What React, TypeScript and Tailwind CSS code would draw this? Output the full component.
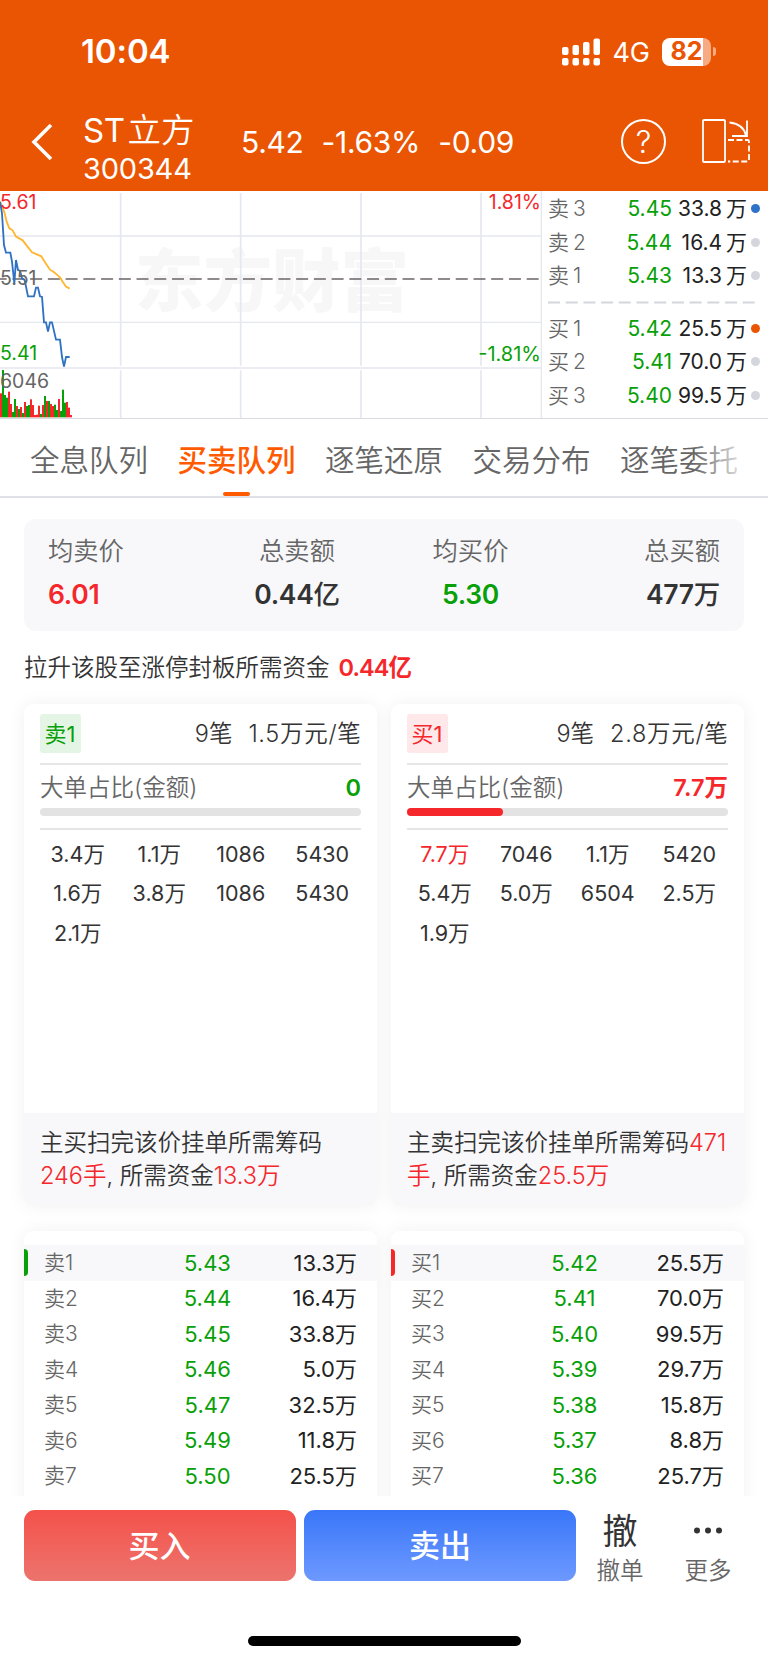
import clsx from 'clsx';

interface Level {
    label: string;
    price: string;
    volume: string;
    dot?: string;
}

interface QueueCardProps {
    side: 'sell' | 'buy';
    badge: string;
    average: string;
    bigAmount: string;
    percent: number;
    orders: string[];
    children: React.ReactNode;
}

const asks: Level[] = [
    { label: '卖 3', price: '5.45', volume: '33.8 万', dot: 'bg-[#2f72c9]' },
    { label: '卖 2', price: '5.44', volume: '16.4 万' },
    { label: '卖 1', price: '5.43', volume: '13.3 万' },
];

const bids: Level[] = [
    { label: '买 1', price: '5.42', volume: '25.5 万', dot: 'bg-[#ea5504]' },
    { label: '买 2', price: '5.41', volume: '70.0 万' },
    { label: '买 3', price: '5.40', volume: '99.5 万' },
];

const sellLevels: Level[] = [
    { label: '卖1', price: '5.43', volume: '13.3万' },
    { label: '卖2', price: '5.44', volume: '16.4万' },
    { label: '卖3', price: '5.45', volume: '33.8万' },
    { label: '卖4', price: '5.46', volume: '5.0万' },
    { label: '卖5', price: '5.47', volume: '32.5万' },
    { label: '卖6', price: '5.49', volume: '11.8万' },
    { label: '卖7', price: '5.50', volume: '25.5万' },
];

const buyLevels: Level[] = [
    { label: '买1', price: '5.42', volume: '25.5万' },
    { label: '买2', price: '5.41', volume: '70.0万' },
    { label: '买3', price: '5.40', volume: '99.5万' },
    { label: '买4', price: '5.39', volume: '29.7万' },
    { label: '买5', price: '5.38', volume: '15.8万' },
    { label: '买6', price: '5.37', volume: '8.8万' },
    { label: '买7', price: '5.36', volume: '25.7万' },
];

const tabs = ['全息队列', '买卖队列', '逐笔还原', '交易分布', '逐笔委托'];

// [height, isUp]
const volumeBars: [number, number][] = [
    [72, 1], [142, 0], [67, 0], [59, 0], [77, 1], [40, 1], [16, 0], [55, 0], [34, 1], [25, 0], [31, 1], [13, 0],
    [46, 1], [34, 0], [37, 0], [54, 1], [37, 1], [7, 1], [8, 1], [35, 1], [10, 0], [37, 1], [64, 0], [49, 1],
    [49, 0], [40, 1], [34, 1], [38, 0], [22, 0], [55, 1], [19, 0], [83, 0], [44, 0], [46, 1], [29, 1], [7, 1],
];

function StatusBar() {
    return (
        <div className="flex h-[103px] items-center pl-[81px] pr-[52px] text-white">
            <span className="text-[33px] font-semibold leading-none tracking-[-0.1px]">10:04</span>
            <div className="ml-auto flex items-center">
                <svg className="h-7 w-[39px]" viewBox="0 0 39 28" fill="currentColor">
                    <rect x="0" y="9" width="6.5" height="8" rx="2" />
                    <rect x="10.5" y="7" width="6.5" height="10" rx="2" />
                    <rect x="21" y="4" width="6.5" height="13" rx="2" />
                    <rect x="31.5" y="0.5" width="6.5" height="16.5" rx="2" />
                    <rect x="0" y="20" width="6.5" height="7.5" rx="2" />
                    <rect x="10.5" y="20" width="6.5" height="7.5" rx="2" />
                    <rect x="21" y="20" width="6.5" height="7.5" rx="2" />
                    <rect x="31.5" y="20" width="6.5" height="7.5" rx="2" />
                </svg>
                <span className="ml-[11px] pt-[2px] text-[27px] font-normal leading-none">4G</span>
                <div className="ml-[12px] flex h-[28px] w-[49px] items-center justify-center rounded-[8px] bg-[linear-gradient(90deg,#fff_83%,#f6ab82_83%)]">
                    <span className="text-[25px] font-bold leading-none text-[#ea5504]">82</span>
                </div>
                <span className="ml-[2px] h-[9px] w-[3px] rounded-r-full bg-[#f6ab82]" />
            </div>
        </div>
    );
}

function TitleBar() {
    return (
        <div className="flex h-[87px] text-white">
            <svg className="ml-[31px] mt-[20px] h-[38px] w-[22px]" viewBox="0 0 22 38" fill="none" stroke="currentColor" strokeWidth="3.6">
                <path d="M20 2 3 19l17 17" />
            </svg>
            <div className="ml-[30px] mt-[10px] w-[158px]">
                <div className="whitespace-nowrap text-[33px] leading-[34px]">
                    <span className="font-normal tracking-[-0.5px]">ST</span>
                    <span className="ml-[3px] text-[33.5px]">立方</span>
                </div>
                <div className="mt-[4px] text-[29px] font-normal leading-[36px] tracking-[-0.2px]">300344</div>
            </div>
            <div className="mt-[21px] flex h-[36px] items-center gap-[18px] text-[30px] font-normal leading-none tracking-[-0.3px]">
                <span>5.42</span>
                <span>-1.63%</span>
                <span>-0.09</span>
            </div>
            <div className="ml-auto mt-[16px] flex size-[45px] shrink-0 items-center justify-center rounded-full border-2 border-white text-[31px] leading-none">?</div>
            <svg className="ml-[35px] mr-[17px] mt-[15px] h-[46px] w-[50px] shrink-0" viewBox="0 0 50 46" fill="none" stroke="currentColor" strokeWidth="1.8">
                <rect x="2" y="2" width="22" height="42" rx="1" />
                <path d="M28.5 4.500q14 1.500 16.500 13M46 2.500v15.500H31" />
                <path d="M27 22h19.500a1.500 1.500 0 0 1 1.500 1.500V42a1.500 1.500 0 0 1-1.500 1.500H27" strokeDasharray="6 2.500" />
            </svg>
        </div>
    );
}

function MinuteChart() {
    return (
        <div className="relative h-[227px] w-[542px] shrink-0 text-[19.5px] font-normal leading-none">
            <svg className="block h-full w-full" viewBox="0 18 1626 681">
                <text x="405" y="362" fontSize="205" fontWeight="900" fill="#f7f7f7" textLength="822" lengthAdjust="spacingAndGlyphs" fontFamily="Noto Sans CJK SC">
                    东方财富
                </text>
                <g stroke="#e6e8ef" strokeWidth="5">
                    {[362, 722, 1083, 1443].map((x) => (
                        <path key={x} d={`M${x} 24V542M${x} 556V699`} />
                    ))}
                    <path d="M0 153H1623M0 412H1623M0 549H1623M1624 18V699" strokeWidth="4" />
                </g>
                <path d="M0 282H1623" stroke="#6b6467" strokeWidth="4" strokeDasharray="36 17.200" strokeDashoffset="16" />
                {volumeBars.map(([height, up], i) => (
                    <rect key={i} x={i * 6} y={697 - height} width="6" height={height} fill={up ? '#f5272b' : '#08a008'} />
                ))}
                <path
                    d="M0 50 8 68 14 85 20 110 28 130 38 136 48 155 68 166 82 184 96 202 124 214 136 233 150 254 160 260 170 268 180 277 188 290 198 305 209 311"
                    fill="none"
                    stroke="#ffb62e"
                    strokeWidth="5.5"
                />
                <path
                    d="M0 50 6 85 12 180 18 203 31 203 36 230 43 295 48 225 54 255 60 257 66 280 74 285 84 334 102 334 108 308 114 308 120 334 126 336 132 412 138 412 144 440 150 412 156 412 168 464 180 464 186 516 192 545 198 516 209 516"
                    fill="none"
                    stroke="#2f72c4"
                    strokeWidth="5.5"
                />
            </svg>
            <span className="absolute left-0 top-[2px] text-[#f5272b]">5.61</span>
            <span className="absolute left-0 top-[78px] text-[#666]">5.51</span>
            <span className="absolute left-0 top-[153px] text-[#08a008]">5.41</span>
            <span className="absolute left-0 top-[181px] text-[#666]">6046</span>
            <span className="absolute right-px top-[2px] text-[#f5272b]">1.81%</span>
            <span className="absolute right-px top-[153px] text-[20px] text-[#08a008]">-1.81%</span>
        </div>
    );
}

function BookRow({ label, price, volume, dot }: Level) {
    return (
        <div className="flex h-[33.5px] items-center text-[21px] leading-none [word-spacing:-2px]">
            <span className="w-[60px] text-[#666]">{label}</span>
            <span className="w-[64px] text-right font-normal text-[#08a008]">{price}</span>
            <span className="w-[75px] whitespace-nowrap text-right font-normal text-[#222]">{volume}</span>
            <span className={clsx('ml-[4px] size-[9px] rounded-full', dot ?? 'bg-[#d3d6dd]')} />
        </div>
    );
}

function OrderBook() {
    return (
        <div className="flex-1 pl-[6px] pt-px">
            {asks.map((row) => (
                <BookRow key={row.label} {...row} />
            ))}
            <svg className="my-[8px] block h-[3px] w-[208px]" viewBox="0 0 208 3">
                <path d="M0 1.500H208" stroke="#d3d6dd" strokeWidth="2" strokeDasharray="12 5.700" />
            </svg>
            {bids.map((row) => (
                <BookRow key={row.label} {...row} />
            ))}
        </div>
    );
}

function Tabs() {
    return (
        <div className="relative flex h-[79px] gap-[29.5px] overflow-hidden border-b-2 border-[#dfe0e8] pl-[30px] text-[29.5px] text-[#666]">
            {tabs.map((tab, i) => (
                <div key={tab} className={clsx('relative shrink-0 leading-[82px]', i === 1 && 'font-medium text-[#ff5a00]')}>
                    {tab}
                    {i === 1 && <span className="absolute bottom-0 left-[45px] h-[4px] w-[27px] rounded-full bg-[#ff5a00]" />}
                </div>
            ))}
            <div className="absolute inset-y-0 right-0 w-[75px] bg-linear-to-r from-white/0 to-white to-80%" />
        </div>
    );
}

function Summary() {
    return (
        <div className="mx-6 mt-[21px] grid h-[112px] grid-cols-[168px_162px_185px_157px] rounded-[12px] bg-[#f8f8fb] px-6 pt-[13px] text-center text-[26.5px] font-semibold leading-[48px] tracking-[-0.3px] text-[#333]">
            <div className="text-left text-[#f5272b]">
                <div className="text-[25.3px] font-[350] leading-[38px] tracking-normal text-[#666]">均卖价</div>
                6.01
            </div>
            <div>
                <div className="text-[25.3px] font-[350] leading-[38px] tracking-normal text-[#666]">总卖额</div>
                0.44<span className="font-medium">亿</span>
            </div>
            <div className="text-[#08a008]">
                <div className="text-[25.3px] font-[350] leading-[38px] tracking-normal text-[#666]">均买价</div>
                5.30
            </div>
            <div className="text-right">
                <div className="text-[25.3px] font-[350] leading-[38px] tracking-normal text-[#666]">总买额</div>
                477<span className="font-medium">万</span>
            </div>
        </div>
    );
}

function QueueCard({ side, badge, average, bigAmount, percent, orders, children }: QueueCardProps) {
    const isSell = side === 'sell';

    return (
        <div className="flex h-[502px] flex-col overflow-hidden rounded-[9px] bg-white shadow-[0_0_18px_rgba(0,0,0,0.06)]">
            <div className="flex-1 px-4 pt-[10px]">
                <div className="flex h-[39px] items-center text-[23.5px] leading-none text-[#333]">
                    <span
                        className={clsx(
                            'flex h-[39px] w-[41px] items-center justify-center rounded-[3px] pr-px text-[22px] font-normal',
                            isSell ? 'bg-[#e5f5e5] text-[#08a008]' : 'bg-[#fee8e9] text-[#f5272b]'
                        )}
                    >
                        {badge}
                    </span>
                    <span className="ml-auto">9笔</span>
                    <span className="-mr-[0.5px] ml-4 tracking-[0.7px]">{average}</span>
                </div>
                <div className="mt-[10px] flex h-[44px] items-center justify-between border-t-2 border-[#e6e6e6] pt-[3px] text-[23.5px] leading-none">
                    <span className="text-[#666]">大单占比(金额)</span>
                    <span className={clsx('font-semibold', isSell ? 'text-[#08a008]' : 'text-[#f5272b]')}>{bigAmount}</span>
                </div>
                <div className="mt-px h-[8px] rounded-full bg-[#e3e3e3]">
                    <div className="h-full rounded-full bg-[#f5272b]" style={{ width: `${percent}%` }} />
                </div>
                <div className="mt-[12px] border-t-2 border-[#e6e6e6] pt-[5px]">
                    <div className="-ml-[3px] -mr-[2px] grid grid-cols-4 text-center text-[21.5px] leading-[39.3px] text-[#333]">
                        {orders.map((order, i) => (
                            <span key={i} className={clsx('font-normal', !isSell && i === 0 && 'text-[#f5272b]')}>
                                {order}
                            </span>
                        ))}
                    </div>
                </div>
            </div>
            <div className="h-[93px] bg-[#f8f8fb] pl-4 pr-3 pt-[13px] text-[23.5px] leading-[33px] text-[#333]">{children}</div>
        </div>
    );
}

function LevelTable({ levels, marker }: { levels: Level[]; marker: string }) {
    return (
        <div className="h-[300px] overflow-hidden rounded-t-[9px] bg-white pt-[14px] shadow-[0_0_18px_rgba(0,0,0,0.06)]">
            {levels.map(({ label, price, volume }, i) => (
                <div key={label} className={clsx('relative grid h-[35.5px] grid-cols-[100px_1fr_86px] items-center px-5 text-[22px] leading-none', i === 0 && 'bg-[#f8f8fb]')}>
                    {i === 0 && <span className={clsx('absolute left-0 top-1 h-[27px] w-1 rounded-r-[4px]', marker)} />}
                    <span className="text-[21px] text-[#666]">{label}</span>
                    <span className="text-center font-normal text-[#08a008]">{price}</span>
                    <span className="text-right font-normal text-[#222]">{volume}</span>
                </div>
            ))}
        </div>
    );
}

function BottomBar() {
    return (
        <div className="relative h-[167px] bg-white pl-6 pt-[14px]">
            <div className="flex gap-2">
                <button className="h-[71px] w-[272px] rounded-[11px] bg-linear-to-b from-[#f4514a] to-[#ec736d] pr-px pt-px text-[31px] font-medium text-white">买入</button>
                <button className="h-[71px] w-[272px] rounded-[11px] bg-linear-to-b from-[#3976f8] to-[#6d99ff] pt-px text-[31px] font-medium text-white">卖出</button>
                <div className="ml-[6px] flex w-[60px] flex-col items-center text-[#333]">
                    <span className="h-[42px] text-[35px] font-normal leading-[42px]">撤</span>
                    <span className="text-[23.5px] leading-[38px] text-[#666]">撤单</span>
                </div>
                <div className="ml-[20px] flex w-[60px] flex-col items-center text-[#333]">
                    <svg className="h-[42px] w-[30px]" viewBox="0 0 30 42" fill="currentColor">
                        <circle cx="4" cy="20.500" r="3" />
                        <circle cx="15" cy="20.500" r="3" />
                        <circle cx="26" cy="20.500" r="3" />
                    </svg>
                    <span className="text-[23.5px] leading-[38px] text-[#666]">更多</span>
                </div>
            </div>
            <div className="absolute bottom-[17px] left-[248px] h-[10px] w-[273px] rounded-full bg-black" />
        </div>
    );
}

export default function App() {
    return (
        <div className="h-[1663px] w-[768px] overflow-hidden bg-white font-[Inter,'Noto_Sans_CJK_SC',sans-serif] font-[350]">
            <header className="h-[191px] bg-[#ea5504]">
                <StatusBar />
                <TitleBar />
            </header>
            <div className="flex h-[228px] border-b border-[#d9dae0]">
                <MinuteChart />
                <OrderBook />
            </div>
            <Tabs />
            <main className="h-[998px] overflow-hidden">
                <Summary />
                <p className="ml-6 mt-[20px] text-[23.5px] leading-[33px] text-[#333]">
                    拉升该股至涨停封板所需资金<span className="ml-[9px] font-semibold tracking-[-0.9px] text-[#f5272b]">0.44亿</span>
                </p>
                <div className="mx-6 mt-5 grid grid-cols-2 gap-x-[14px] gap-y-[25px]">
                    <QueueCard
                        side="sell"
                        badge="卖1"
                        average="1.5万元/笔"
                        bigAmount="0"
                        percent={0}
                        orders={['3.4万', '1.1万', '1086', '5430', '1.6万', '3.8万', '1086', '5430', '2.1万']}
                    >
                        主买扫完该价挂单所需筹码
                        <br />
                        <span className="text-[#f5272b]">246手</span>, 所需资金<span className="text-[#f5272b]">13.3万</span>
                    </QueueCard>
                    <QueueCard
                        side="buy"
                        badge="买1"
                        average="2.8万元/笔"
                        bigAmount="7.7万"
                        percent={30}
                        orders={['7.7万', '7046', '1.1万', '5420', '5.4万', '5.0万', '6504', '2.5万', '1.9万']}
                    >
                        主卖扫完该价挂单所需筹码<span className="text-[#f5272b]">471</span>
                        <br />
                        <span className="text-[#f5272b]">手</span>, 所需资金<span className="text-[#f5272b]">25.5万</span>
                    </QueueCard>
                    <LevelTable levels={sellLevels} marker="bg-[#08a008]" />
                    <LevelTable levels={buyLevels} marker="bg-[#f5272b]" />
                </div>
            </main>
            <BottomBar />
        </div>
    );
}
